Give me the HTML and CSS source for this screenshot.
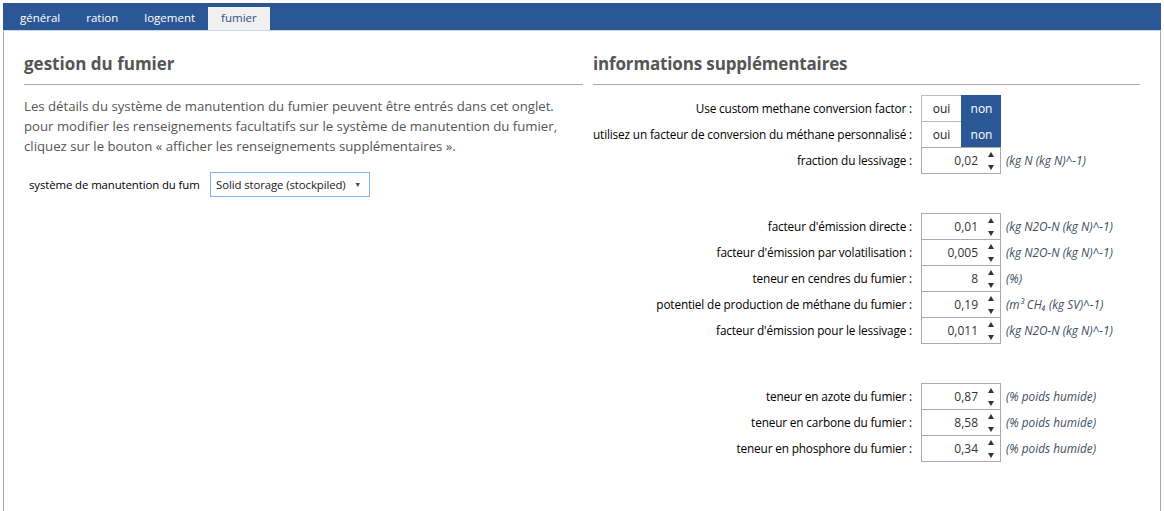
FILE: index.html
```html
<!DOCTYPE html>
<html lang="fr">
<head>
<meta charset="utf-8">
<title>fumier</title>
<link rel="stylesheet" href="styles.css">
</head>
<body>
<div class="app">
  <nav class="tabbar">
    <span class="tab">général</span>
    <span class="tab">ration</span>
    <span class="tab">logement</span>
    <span class="tab active">fumier</span>
  </nav>
  <main class="content">
    <section class="col left">
      <h2 class="heading">gestion du fumier</h2>
      <p class="intro">Les détails du système de manutention du fumier peuvent être entrés dans cet onglet.<br>pour modifier les renseignements facultatifs sur le système de manutention du fumier,<br>cliquez sur le bouton « afficher les renseignements supplémentaires ».</p>
      <div class="select-row">
        <span class="select-label">système de manutention du fum</span>
        <div class="select"><span>Solid storage (stockpiled)</span><span class="caret">▼</span></div>
      </div>
    </section>
    <section class="col right">
      <h2 class="heading">informations supplémentaires</h2>
      <div class="form">
        <div class="row"><span class="lbl">Use custom methane conversion factor :</span><div class="toggle"><span class="opt">oui</span><span class="opt on">non</span></div></div>
        <div class="row"><span class="lbl">utilisez un facteur de conversion du méthane personnalisé :</span><div class="toggle"><span class="opt">oui</span><span class="opt on">non</span></div></div>
        <div class="row"><span class="lbl">fraction du lessivage :</span><div class="num"><span class="val">0,02</span><span class="spin"><i class="up"></i><i class="down"></i></span></div><span class="unit">(kg N (kg N)^-1)</span></div>
      </div>
      <div class="form group">
        <div class="row"><span class="lbl">facteur d'émission directe :</span><div class="num"><span class="val">0,01</span><span class="spin"><i class="up"></i><i class="down"></i></span></div><span class="unit">(kg N2O-N (kg N)^-1)</span></div>
        <div class="row"><span class="lbl">facteur d'émission par volatilisation :</span><div class="num"><span class="val">0,005</span><span class="spin"><i class="up"></i><i class="down"></i></span></div><span class="unit">(kg N2O-N (kg N)^-1)</span></div>
        <div class="row"><span class="lbl">teneur en cendres du fumier :</span><div class="num"><span class="val">8</span><span class="spin"><i class="up"></i><i class="down"></i></span></div><span class="unit">(%)</span></div>
        <div class="row"><span class="lbl">potentiel de production de méthane du fumier :</span><div class="num"><span class="val">0,19</span><span class="spin"><i class="up"></i><i class="down"></i></span></div><span class="unit">(m³ CH₄ (kg SV)^-1)</span></div>
        <div class="row"><span class="lbl">facteur d'émission pour le lessivage :</span><div class="num"><span class="val">0,011</span><span class="spin"><i class="up"></i><i class="down"></i></span></div><span class="unit">(kg N2O-N (kg N)^-1)</span></div>
      </div>
      <div class="form group">
        <div class="row"><span class="lbl">teneur en azote du fumier :</span><div class="num"><span class="val">0,87</span><span class="spin"><i class="up"></i><i class="down"></i></span></div><span class="unit">(% poids humide)</span></div>
        <div class="row"><span class="lbl">teneur en carbone du fumier :</span><div class="num"><span class="val">8,58</span><span class="spin"><i class="up"></i><i class="down"></i></span></div><span class="unit">(% poids humide)</span></div>
        <div class="row"><span class="lbl">teneur en phosphore du fumier :</span><div class="num"><span class="val">0,34</span><span class="spin"><i class="up"></i><i class="down"></i></span></div><span class="unit">(% poids humide)</span></div>
      </div>
    </section>
  </main>
</div>
</body>
</html>
```

FILE: styles.css
```css
* { box-sizing: border-box; }
html, body { margin: 0; padding: 0; background: #fff; }
body {
  font-family: "Open Sans", "Noto Sans", sans-serif;
  color: #000;
  overflow: hidden;
}
.app {
  padding: 3px 3px 0 3px;
  height: 511px;
  display: flex;
  flex-direction: column;
}
.tabbar {
  background: #2b5797;
  height: 28px;
  display: flex;
  align-items: flex-end;
  padding-left: 4px;
  border-bottom: 1px solid #c9d7ea;
}
.tab {
  color: #fff;
  font-size: 11.5px;
  padding: 0 13px;
  height: 23px;
  line-height: 22px;
}
.tab.active {
  background: #f0f0f0;
  color: #2b4f86;
}
.content {
  flex: 1;
  border-left: 1px solid #a8a8a8;
  border-right: 1px solid #a8a8a8;
  display: flex;
  gap: 10px;
  padding: 0 20px 0 20px;
}
.col.left { width: 559px; flex: none; }
.col.right { flex: 1; }
.heading {
  margin: 20px 0 0 0;
  font-size: 17px;
  font-weight: 700;
  color: #555;
  line-height: 26px;
  height: 34px;
  border-bottom: 1px solid #a9a9a9;
}
.right .heading { letter-spacing: -0.15px; }
.intro {
  margin: 11px 0 0 0;
  color: #555;
  font-size: 13.2px;
  line-height: 20px;
}
.select-row {
  display: flex;
  align-items: center;
  margin-top: 16px;
  padding-left: 5px;
}
.select-label {
  font-size: 11.4px;
  letter-spacing: -0.1px;
  width: 181px;
  flex: none;
  white-space: nowrap;
}
.select {
  width: 160px;
  height: 25px;
  flex: none;
  border: 1px solid #7eb4ea;
  display: flex;
  align-items: center;
  justify-content: space-between;
  padding: 0 8px 0 5px;
  font-size: 11.4px;
  letter-spacing: -0.1px;
  color: #222;
  white-space: nowrap;
}
.caret { font-size: 7px; color: #444; }
.form {
  margin-top: 10px;
  display: flex;
  flex-direction: column;
}
.form.group { margin-top: 40px; }
.row {
  display: flex;
  align-items: center;
  height: 26px;
}
.lbl {
  width: 328px;
  flex: none;
  display: flex;
  justify-content: flex-end;
  padding-right: 9px;
  font-size: 11.8px;
  letter-spacing: -0.15px;
  white-space: nowrap;
}
.toggle { display: flex; height: 26px; }
.opt {
  width: 40px;
  height: 26px;
  display: flex;
  align-items: center;
  justify-content: center;
  font-size: 12px;
  border: 1px solid #bbb;
  border-right: 0;
  border-bottom: 0;
  color: #222;
}
.opt.on {
  background: #2b5797;
  color: #fff;
  border-color: #2b5797;
}
.num {
  width: 80px;
  flex: none;
  height: 27px;
  border: 1px solid #aaa;
  display: flex;
  align-items: center;
  justify-content: flex-end;
  font-size: 12px;
  color: #333;
  margin-bottom: -1px;
}
.val { padding-right: 6px; }
.spin {
  width: 14px;
  height: 100%;
  display: flex;
  flex-direction: column;
  align-items: center;
  justify-content: center;
  gap: 8px;
  margin-right: 2px;
}
.spin i { display: block; width: 0; height: 0; border-left: 3.5px solid transparent; border-right: 3.5px solid transparent; }
.spin .up { border-bottom: 5px solid #333; }
.spin .down { border-top: 5px solid #333; }
.unit {
  margin-left: 5px;
  font-size: 11.8px;
  font-style: italic;
  color: #3e4e60;
  white-space: nowrap;
}
```
